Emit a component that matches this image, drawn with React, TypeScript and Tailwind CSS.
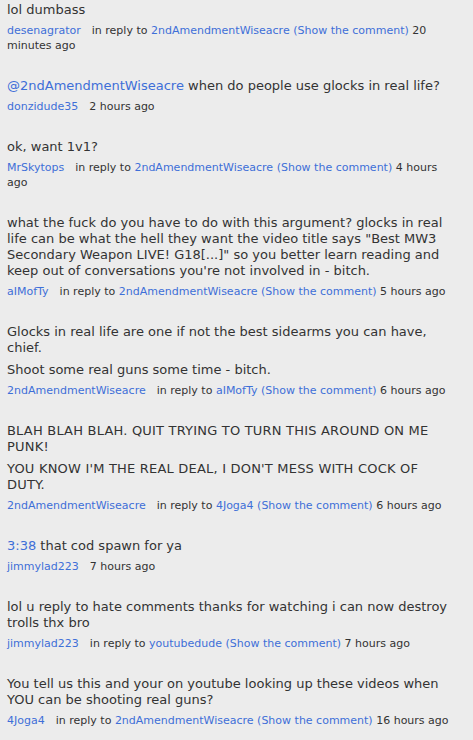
import React from "react";

type Part = { text: string; link?: boolean };

type Comment = {
  body: Part[][];
  author: string;
  replyTo?: string;
  time: string;
  wide?: boolean;
};

const comments: Comment[] = [
  {
    body: [[{ text: "lol dumbass" }]],
    author: "desenagrator",
    replyTo: "2ndAmendmentWiseacre",
    time: "20 minutes ago",
  },
  {
    body: [[{ text: "@2ndAmendmentWiseacre", link: true }, { text: " when do people use glocks in real life?" }]],
    author: "donzidude35",
    time: "2 hours ago",
  },
  {
    body: [[{ text: "ok, want 1v1?" }]],
    author: "MrSkytops",
    replyTo: "2ndAmendmentWiseacre",
    time: "4 hours ago",
  },
  {
    body: [
      [
        {
          text: "what the fuck do you have to do with this argument? glocks in real life can be what the hell they want the video title says \"Best MW3 Secondary Weapon LIVE! G18[...]\" so you better learn reading and keep out of conversations you're not involved in - bitch.",
        },
      ],
    ],
    author: "aIMofTy",
    replyTo: "2ndAmendmentWiseacre",
    time: "5 hours ago",
  },
  {
    body: [
      [{ text: "Glocks in real life are one if not the best sidearms you can have, chief." }],
      [{ text: "Shoot some real guns some time - bitch." }],
    ],
    author: "2ndAmendmentWiseacre",
    replyTo: "aIMofTy",
    time: "6 hours ago",
  },
  {
    body: [
      [{ text: "BLAH BLAH BLAH. QUIT TRYING TO TURN THIS AROUND ON ME PUNK!" }],
      [{ text: "YOU KNOW I'M THE REAL DEAL, I DON'T MESS WITH COCK OF DUTY." }],
    ],
    author: "2ndAmendmentWiseacre",
    replyTo: "4Joga4",
    time: "6 hours ago",
    wide: true,
  },
  {
    body: [[{ text: "3:38", link: true }, { text: " that cod spawn for ya" }]],
    author: "jimmylad223",
    time: "7 hours ago",
  },
  {
    body: [[{ text: "lol u reply to hate comments thanks for watching i can now destroy trolls thx bro" }]],
    author: "jimmylad223",
    replyTo: "youtubedude",
    time: "7 hours ago",
  },
  {
    body: [[{ text: "You tell us this and your on youtube looking up these videos when YOU can be shooting real guns?" }]],
    author: "4Joga4",
    replyTo: "2ndAmendmentWiseacre",
    time: "16 hours ago",
  },
];

function CommentItem({ c }: { c: Comment }) {
  return (
    <div className="flex flex-col">
      <div
        className={
          c.wide
            ? "flex flex-col gap-[6px] text-[13px] leading-4 tracking-[0.2px] text-[#333]"
            : "flex flex-col gap-[6px] text-[13px] leading-4 text-[#333]"
        }
      >
        {c.body.map((p, i) => (
          <p key={i}>
            {p.map((part, j) =>
              part.link ? (
                <a key={j} className="text-[#3e6fd8]">
                  {part.text}
                </a>
              ) : (
                <span key={j}>{part.text}</span>
              )
            )}
          </p>
        ))}
      </div>
      <div className="mt-[5px] text-[11px] leading-[15px] text-[#333]">
        <a className="mr-[11px] text-[#3e6fd8]">{c.author}</a>
        {c.replyTo && (
          <>
            in reply to <a className="text-[#3e6fd8]">{c.replyTo}</a>{" "}
            <a className="text-[#3e6fd8]">(Show the comment)</a>{" "}
          </>
        )}
        {c.time}
      </div>
    </div>
  );
}

export default function App() {
  return (
    <div
      className="flex min-h-[740px] w-[473px] flex-col gap-[25px] bg-[#ececec] pl-[7px] pr-[16px] pt-[2px]"
      style={{ fontFamily: '"DejaVu Sans", Verdana, sans-serif' }}
    >
      {comments.map((c, i) => (
        <CommentItem key={i} c={c} />
      ))}
    </div>
  );
}
